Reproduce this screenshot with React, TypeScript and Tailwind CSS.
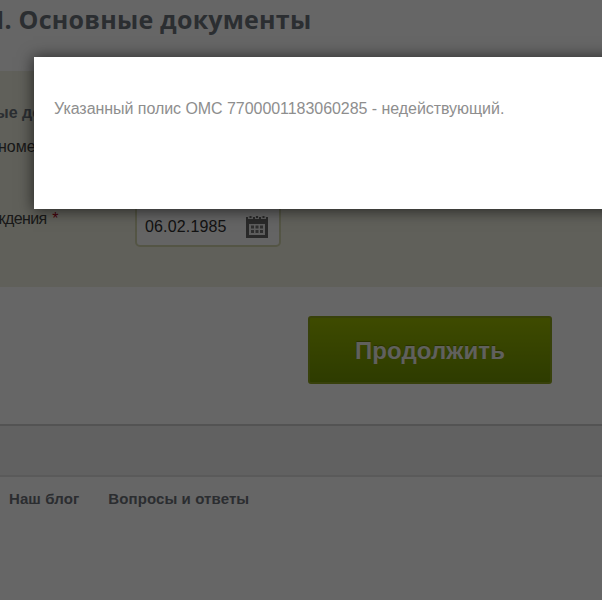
import React from 'react';

const footerLinks = ['Наш блог', 'Вопросы и ответы'];

const CalendarIcon = () => (
    <svg width="22" height="22" viewBox="0 0 22 22" fill="none">
        <path d="M0 1h22v21H0z" fill="#666666" />
        <path d="M3 8h16v11H3z" fill="#e8e8e8" />
        <path d="M2 0h5v3H2zM9 0h4v3H9zM15 0h5v3h-5z" fill="#e8e8e8" />
        <path d="M3.5 0h2v2h-2zM10 0h2v2h-2zM16.5 0h2v2h-2z" fill="#666666" />
        <path
            d="M5 9.500h3v3H5zM9.500 9.500h3v3h-3zM14 9.500h3v3h-3zM5 14h3v3H5zM9.500 14h3v3h-3zM14 14h3v3h-3z"
            fill="#777777"
        />
    </svg>
);

const Modal = () => (
    <div className="absolute left-[34px] top-[57px] h-[152px] w-[640px] bg-white pl-[20px] pt-[42px] shadow-[0_1px_14px_1px_rgba(0,0,0,0.6)]">
        <p className="whitespace-nowrap text-[16px] leading-[20px] tracking-[-0.05px] text-[#8e8e8e]">
            Указанный полис ОМС 7700001183060285 - недействующий.
        </p>
    </div>
);

const App = () => {
    return (
        <div className="relative h-[600px] w-[602px] overflow-hidden bg-white font-['Liberation_Sans',Arial,sans-serif]">
            <main className="flex h-[424px] flex-col">
                <div className="h-[71px] pt-[2px]">
                    <h1 className="-ml-[4px] whitespace-nowrap font-['Open_Sans',sans-serif] text-[25px] font-bold leading-[34px] tracking-[0.22px] text-[#6c737c]">
                        I. Основные документы
                    </h1>
                </div>

                {/* Form */}
                <section className="h-[216px] shrink-0 bg-[#f0f0e0]">
                    <h2 className="-ml-[5px] pt-[32px] text-[16px] font-bold leading-[20px] text-[#6c737c]">
                        ые до
                    </h2>
                    <div className="-ml-[2px] mt-[14px] text-[16px] leading-[20px] text-[#404040]">номе</div>
                    <div className="mt-[40px] flex h-[50px] items-start">
                        <label className="-ml-[5px] w-[140px] shrink-0 pt-[12px] text-[16px] leading-[20px] tracking-[-0.65px] text-[#404040]">
                            ждения <span className="ml-[2px] text-[#b00020]">*</span>
                        </label>
                        <div className="flex h-[50px] w-[146px] items-center justify-between rounded-[5px] border-2 border-[#d2d4ac] bg-[#fafafa] pb-[2px] pl-[8px] pr-[11px] pt-[11px]">
                            <span className="text-[16px] leading-[20px] tracking-[0.15px] text-[#303030]">06.02.1985</span>
                            <CalendarIcon />
                        </div>
                    </div>
                </section>

                <div className="flex pl-[308px] pt-[29px]">
                    <button className="h-[68px] w-[244px] rounded-[3px] border-2 border-[#8da21c] bg-linear-to-b from-[#9cba00] to-[#729500] pt-[2px] text-[24px] font-bold tracking-[0.1px] text-[#f0f0e8] [text-shadow:0_-1px_1px_rgba(0,0,0,0.3)]">
                        Продолжить
                    </button>
                </div>
            </main>

            <div className="h-[53px] border-b-2 border-t-2 border-[#e0e0e0] border-t-[#d0d0d0] bg-[#f2f2f2]" />

            <footer className="flex gap-[29px] pl-[9px] pt-[12px] text-[15px] font-bold leading-[20px] tracking-[0.1px] text-[#6c7078]">
                {footerLinks.map((link) => (
                    <a key={link}>{link}</a>
                ))}
            </footer>

            <div className="absolute inset-0 bg-black/60" />
            <Modal />
        </div>
    );
};

export default App;
